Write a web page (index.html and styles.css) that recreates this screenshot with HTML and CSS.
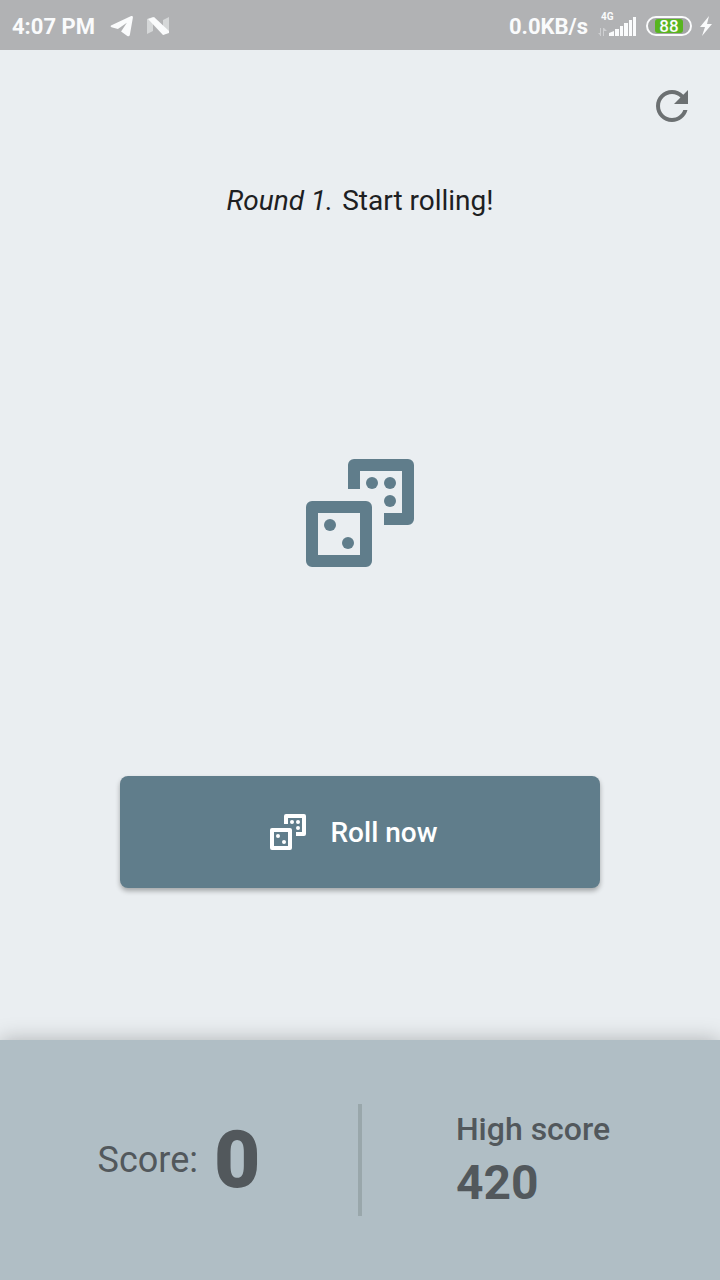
FILE: index.html
```html
<!DOCTYPE html>
<html lang="en">
<head>
<meta charset="utf-8">
<meta name="viewport" content="width=device-width, initial-scale=1">
<title>Dice</title>
<link rel="stylesheet" href="styles.css">
</head>
<body>
<svg class="sprite" aria-hidden="true">
  <symbol id="dice" viewBox="0 0 18 18">
    <path fill-rule="evenodd" d="M1 7H10A1 1 0 0 1 11 8V17A1 1 0 0 1 10 18H1A1 1 0 0 1 0 17V8A1 1 0 0 1 1 7ZM2 9V16H9V9Z"/>
    <path d="M8 0H17A1 1 0 0 1 18 1V10A1 1 0 0 1 17 11H13V9H16V2H9V5H7V1A1 1 0 0 1 8 0Z"/>
    <circle cx="4" cy="11" r="1"/><circle cx="7" cy="14" r="1"/>
    <circle cx="11" cy="4" r="1"/><circle cx="14" cy="4" r="1"/><circle cx="14" cy="7" r="1"/>
  </symbol>
</svg>
<div class="app">
  <header class="status">
    <div class="status-group">
      <span>4:07 PM</span>
      <svg class="telegram" viewBox="0 0 26 24" aria-hidden="true"><path d="M1 11.500 23 1.200Q25.200.4 24.900 2.800L21.600 21.500Q21 23.900 18.800 22.800L12 18 18.300 8.500 8.500 15.200 1.500 13.300Q-.4 12.500 1 11.500Z"/></svg>
      <svg class="nougat" viewBox="0 0 22 18" aria-hidden="true"><path opacity=".5" d="M0 2 6 0V14L0 17ZM16 3 22 0V15L16 18Z"/><path d="M1 2 7 0 22 14V16L16 18Z"/></svg>
    </div>
    <div class="status-group status-right">
      <span>0.0KB/s</span>
      <div class="network">
        <span class="network-type">4G</span>
        <svg class="signal" viewBox="0 0 38 20" aria-hidden="true"><g opacity=".4"><path d="M2 11h1v8H2zM0 16h3v3zM5 11h1v8H5zM6 11l3 3H6z"/></g><path d="M11 19v-3l5-2v5zM17 12h4v7h-4zM22 9h3v10h-3zM26 6h4v13h-4zM31 3h3v16h-3zM35 0h3v19h-3z"/></svg>
      </div>
      <div class="battery"><span class="battery-fill">88</span></div>
      <svg class="bolt" viewBox="0 0 12 20" aria-hidden="true"><path d="M9 0 0 11H5L2 20 12 8H7Z"/></svg>
    </div>
  </header>
  <main class="game">
    <button class="restart" type="button" aria-label="Restart">
      <svg viewBox="0 0 24 24" aria-hidden="true"><path d="M17.650 6.350C16.200 4.900 14.210 4 12 4c-4.420 0-7.990 3.580-7.990 8s3.570 8 7.990 8c3.730 0 6.840-2.550 7.730-6h-2.080c-.82 2.330-3.040 4-5.650 4-3.310 0-6-2.690-6-6s2.690-6 6-6c1.660 0 3.140.69 4.220 1.780L13 11h7V4z"/></svg>
    </button>
    <p class="message"><em>Round 1.</em> Start rolling!</p>
    <div class="board"><svg class="board-dice" aria-hidden="true"><use href="#dice"/></svg></div>
    <button class="roll" type="button"><svg class="roll-dice" aria-hidden="true"><use href="#dice"/></svg><span>Roll now</span></button>
  </main>
  <footer class="scores">
    <div class="score"><span class="score-label">Score:</span><strong class="score-value">0</strong></div>
    <div class="divider"></div>
    <div class="high"><div><div class="high-label">High score</div><strong class="high-value">420</strong></div></div>
  </footer>
</div>
</body>
</html>
```
FILE: styles.css
```css
* { box-sizing: border-box; }
body {
  margin: 0;
  background: #eaeef1;
  color: #1d2022;
  font-family: Roboto, "Liberation Sans", sans-serif;
}
svg { display: block; fill: currentColor; }
button { font: inherit; border: 0; cursor: pointer; }
.sprite { position: absolute; width: 0; height: 0; }
.app { min-height: 100vh; display: flex; flex-direction: column; }

.status {
  display: flex;
  align-items: center;
  justify-content: space-between;
  height: 50px;
  padding: 2px 8px 0 12px;
  background: #b1b2b4;
  color: #fafbfc;
  font-size: 22px;
  font-weight: 700;
}
.status-group { display: flex; align-items: center; gap: 14px; }
.status-right { gap: 10px; }
.telegram { width: 26px; height: 22px; }
.nougat { width: 22px; height: 18px; margin-left: -2px; }
.network { display: flex; flex-direction: column; height: 28px; }
.network-type { height: 5px; padding-left: 3px; font-size: 10px; line-height: 10px; }
.signal { width: 38px; height: 20px; }
.battery {
  width: 46px;
  height: 20px;
  padding: 1px 7px;
  border: 2px solid #fafbfc;
  border-radius: 10px;
  background: #a3a5a5;
}
.battery-fill {
  display: block;
  height: 14px;
  border-radius: 3px;
  background: #58b51f;
  font-size: 17px;
  font-weight: 500;
  line-height: 14px;
  text-align: center;
}
.bolt { width: 12px; height: 20px; margin-left: -2px; }

.game { flex: 1; display: flex; flex-direction: column; align-items: center; }
.restart {
  align-self: flex-end;
  margin: 32px 24px 0;
  padding: 0;
  background: none;
  color: #6c7072;
}
.restart svg { width: 48px; height: 48px; }
.message { margin: 51px 0 0; font-size: 28px; line-height: 40px; }
.message em { margin-right: 2px; }
.board { flex: 1; display: flex; align-items: center; padding-top: 28px; color: #607d8b; }
.board-dice { width: 108px; height: 108px; }
.roll {
  display: flex;
  align-items: center;
  justify-content: center;
  gap: 24px;
  width: 66.666%;
  height: 112px;
  margin-bottom: 152px;
  padding: 0 12px 0 0;
  border-radius: 8px;
  background: #607d8b;
  color: #fff;
  font-size: 28px;
  font-weight: 500;
  box-shadow: 0 3px 5px rgba(0, 0, 0, .3);
}
.roll-dice { width: 36px; height: 36px; }

.scores {
  display: grid;
  grid-template-columns: 1fr 4px 1fr;
  align-items: center;
  min-height: 240px;
  background: #b0bec5;
  color: #52585c;
  box-shadow: 0 0 20px rgba(0, 0, 0, .26);
}
.score { display: flex; align-items: center; justify-content: center; gap: 16px; }
.score-label { font-size: 36px; }
.score-value { font-size: 80px; font-weight: 900; line-height: 112px; }
.divider { height: 112px; background: #99a7ab; }
.high { display: flex; justify-content: center; padding-right: 16px; }
.high-label { font-size: 32px; font-weight: 500; line-height: 48px; }
.high-value { display: block; font-size: 48px; font-weight: 700; line-height: 60px; padding-bottom: 3px; }
```
